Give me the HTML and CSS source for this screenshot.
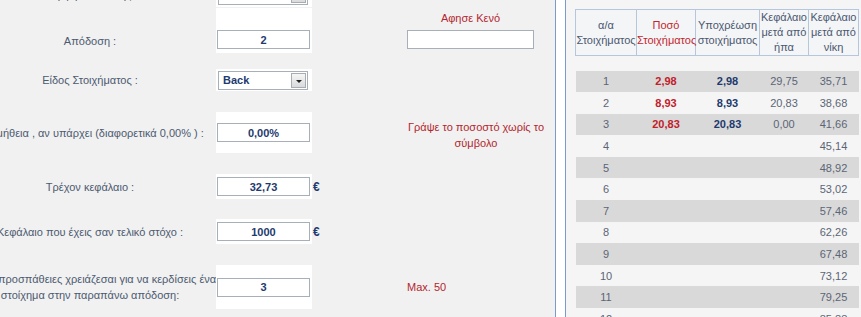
FILE: index.html
```html
<!DOCTYPE html>
<html lang="el">
<head>
    <meta charset="UTF-8">
    <title>Υπολογισμός Στοιχήματος</title>
    <link rel="stylesheet" href="styles.css">
</head>
<body>
    <div class="page">
        <div class="calc">
            <div class="form">
                <div class="row r-format">
                    <div class="label">Μορφή Απόδοσης :</div>
                    <div class="field">
                        <div class="select"><span>Decimal</span><i class="arrow"></i></div>
                    </div>
                    <div class="unit"></div>
                    <div class="note"></div>
                </div>

                <div class="row r-odds">
                    <div class="label">Απόδοση :</div>
                    <div class="field"><input class="input" type="text" value="2" readonly></div>
                    <div class="unit"></div>
                    <div class="note note-stack">
                        <span>Αφησε Κενό</span>
                        <input class="input input-wide" type="text" value="" readonly>
                    </div>
                </div>

                <div class="row r-type">
                    <div class="label">Είδος Στοιχήματος :</div>
                    <div class="field">
                        <div class="select"><span>Back</span><i class="arrow"></i></div>
                    </div>
                    <div class="unit"></div>
                    <div class="note"></div>
                </div>

                <div class="row r-fee">
                    <div class="label">Προμήθεια , αν υπάρχει (διαφορετικά 0,00% ) :</div>
                    <div class="field"><input class="input" type="text" value="0,00%" readonly></div>
                    <div class="unit"></div>
                    <div class="note note-center">Γράψε το ποσοστό χωρίς το<br>σύμβολο</div>
                </div>

                <div class="row r-bank">
                    <div class="label">Τρέχον κεφάλαιο :</div>
                    <div class="field"><input class="input" type="text" value="32,73" readonly></div>
                    <div class="unit">€</div>
                    <div class="note"></div>
                </div>

                <div class="row r-goal">
                    <div class="label">Κεφάλαιο που έχεις σαν τελικό στόχο :</div>
                    <div class="field"><input class="input" type="text" value="1000" readonly></div>
                    <div class="unit">€</div>
                    <div class="note"></div>
                </div>

                <div class="row r-tries">
                    <div class="label">Πόσες προσπάθειες χρειάζεσαι για να κερδίσεις ένα<br>στοίχημα στην παραπάνω απόδοση:</div>
                    <div class="field"><input class="input" type="text" value="3" readonly></div>
                    <div class="unit"></div>
                    <div class="note">Max. 50</div>
                </div>
            </div>
        </div>

        <div class="results">
            <table class="schedule">
                <colgroup>
                    <col style="width: 61px">
                    <col style="width: 59px">
                    <col style="width: 64px">
                    <col style="width: 49px">
                    <col style="width: 50px">
                </colgroup>
                <thead>
                    <tr>
                        <th>α/α<br>Στοιχήματος</th>
                        <th class="red">Ποσό<br>Στοιχήματος</th>
                        <th>Υποχρέωση<br>στοιχήματος</th>
                        <th>Κεφάλαιο<br>μετά από<br>ήπα</th>
                        <th>Κεφάλαιο<br>μετά από<br>νίκη</th>
                    </tr>
                </thead>
                <tbody>
                    <tr class="spacer"><td colspan="5"></td></tr>
                    <tr class="odd"><td>1</td><td class="stake">2,98</td><td class="liab">2,98</td><td>29,75</td><td>35,71</td></tr>
                    <tr><td>2</td><td class="stake">8,93</td><td class="liab">8,93</td><td>20,83</td><td>38,68</td></tr>
                    <tr class="odd"><td>3</td><td class="stake">20,83</td><td class="liab">20,83</td><td>0,00</td><td>41,66</td></tr>
                    <tr><td>4</td><td></td><td></td><td></td><td>45,14</td></tr>
                    <tr class="odd"><td>5</td><td></td><td></td><td></td><td>48,92</td></tr>
                    <tr><td>6</td><td></td><td></td><td></td><td>53,02</td></tr>
                    <tr class="odd"><td>7</td><td></td><td></td><td></td><td>57,46</td></tr>
                    <tr><td>8</td><td></td><td></td><td></td><td>62,26</td></tr>
                    <tr class="odd"><td>9</td><td></td><td></td><td></td><td>67,48</td></tr>
                    <tr><td>10</td><td></td><td></td><td></td><td>73,12</td></tr>
                    <tr class="odd"><td>11</td><td></td><td></td><td></td><td>79,25</td></tr>
                    <tr><td>12</td><td></td><td></td><td></td><td>85,88</td></tr>
                </tbody>
            </table>
        </div>
    </div>
</body>
</html>
```

FILE: styles.css
```css
* {
    box-sizing: border-box;
}

body {
    margin: 0;
    background-color: #ffffff;
    font-family: "Liberation Sans", Arial, sans-serif;
    font-size: 11px;
}

.page {
    display: flex;
    height: 317px;
    overflow: hidden;
}

/* Αριστερή στήλη - φόρμα */
.calc {
    width: 556px;
    flex: none;
    background-color: #f1f1f1;
    border-right: 1px solid #7b9ccb;
    overflow: hidden;
}

.form {
    margin: -17px 0 0 -36px;
}

.row {
    display: grid;
    grid-template-columns: 252px 96px 95px 138px;
}

.row > div {
    display: flex;
    align-items: center;
}

.label {
    justify-content: center;
    text-align: center;
    white-space: nowrap;
    color: #4c5a70;
    line-height: 16px;
}

.field {
    background-color: #ffffff;
    padding: 0 2px 0 1px;
}

.unit {
    color: #1e3a6e;
    font-weight: bold;
    font-size: 12px;
    padding-left: 1px;
}

.note {
    color: #b3262f;
    line-height: 16px;
}

.note-stack {
    width: 127px;
    flex-direction: column;
    justify-content: flex-end;
    gap: 4px;
}

.note-center {
    justify-content: center;
    text-align: center;
    padding-top: 4px;
}

.r-format { height: 24px; }
.r-odds { margin-top: 1px; height: 45px; }
.r-type { margin-top: 16px; height: 22px; }
.r-fee { margin-top: 21px; height: 41px; }
.r-bank { margin-top: 21px; height: 25px; }
.r-goal { margin-top: 20px; height: 25px; }
.r-tries { margin-top: 21px; height: 44px; }

.r-odds > div {
    align-items: flex-end;
    padding-bottom: 4px;
}

.r-odds > .note {
    align-items: center;
}

.input {
    width: 93px;
    height: 19px;
    padding: 0;
    border: 1px solid #a7afb9;
    background-color: #ffffff;
    font-family: "Liberation Sans", Arial, sans-serif;
    font-size: 11px;
    font-weight: bold;
    color: #1e3a6e;
    text-align: center;
    outline: none;
}

.input-wide {
    width: 127px;
}

.select {
    width: 90px;
    height: 19px;
    margin-left: 1px;
    display: flex;
    align-items: center;
    padding: 0 1px 0 4px;
    border: 1px solid #a7afb9;
    background-color: #ffffff;
    font-weight: bold;
    color: #1e3a6e;
}

.arrow {
    margin-left: auto;
    width: 15px;
    height: 15px;
    border: 1px solid #a9adb3;
    background: linear-gradient(#f6f6f6, #d9dadc);
    position: relative;
}

.arrow::after {
    content: "";
    position: absolute;
    left: 4px;
    top: 6px;
    border-left: 3px solid transparent;
    border-right: 3px solid transparent;
    border-top: 3px solid #222222;
}

/* Δεξιά στήλη - πίνακας */
.results {
    flex: 1;
    margin-left: 9px;
    background-color: #f5f5f5;
    border-left: 1px solid #7b9ccb;
    padding: 9px 0 0 9px;
}

.schedule {
    border-collapse: collapse;
    table-layout: fixed;
    width: 283px;
}

.schedule th {
    height: 44px;
    padding: 0;
    border: 1px solid #b6c7dd;
    background-color: #f4f5f7;
    font-weight: normal;
    color: #4a5870;
    line-height: 15px;
    white-space: nowrap;
}

.schedule th.red {
    color: #c3262e;
}

.schedule td {
    height: 21.6px;
    padding: 0;
    text-align: center;
    color: #5b6576;
}

.schedule .spacer td {
    height: 15px;
}

.schedule tr.odd td {
    background-color: #d9d9d9;
}

.schedule td.stake {
    color: #c2202a;
    font-weight: bold;
}

.schedule td.liab {
    color: #1e3a6e;
    font-weight: bold;
}
```
